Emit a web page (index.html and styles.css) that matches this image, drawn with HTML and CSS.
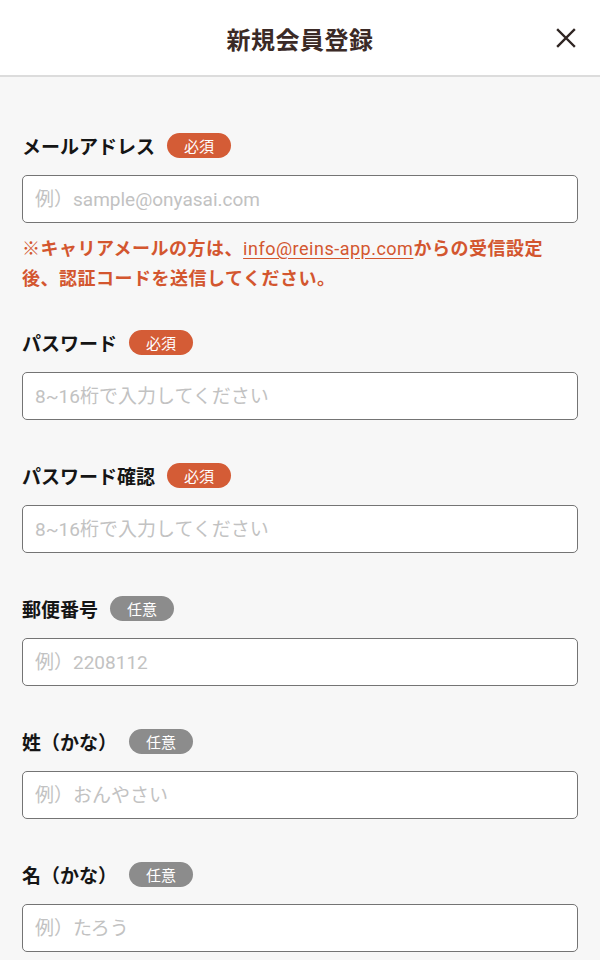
FILE: index.html
```html
<!DOCTYPE html>
<html lang="ja">
<head>
<meta charset="utf-8">
<title>新規会員登録</title>
<link rel="stylesheet" href="styles.css">
</head>
<body>
<header class="header">
  <h1 class="title">新規会員登録</h1>
  <button class="close" aria-label="閉じる">
    <svg width="20" height="20" viewBox="0 0 20 20"><path d="M2 2 L18 18 M18 2 L2 18" stroke="#2f2522" stroke-width="2.4" stroke-linecap="square" fill="none"/></svg>
  </button>
</header>
<main class="form">
  <div class="group">
    <div class="label-row"><span class="label">メールアドレス</span><span class="badge badge-req">必須</span></div>
    <input class="field" type="email" placeholder="例）sample@onyasai.com">
    <p class="note">※キャリアメールの方は、<a class="note-link" href="#">info@reins-app.com</a>からの受信設定後、認証コードを送信してください。</p>
  </div>
  <div class="group">
    <div class="label-row"><span class="label">パスワード</span><span class="badge badge-req">必須</span></div>
    <input class="field" type="text" placeholder="8~16桁で入力してください">
  </div>
  <div class="group">
    <div class="label-row"><span class="label">パスワード確認</span><span class="badge badge-req">必須</span></div>
    <input class="field" type="text" placeholder="8~16桁で入力してください">
  </div>
  <div class="group">
    <div class="label-row"><span class="label">郵便番号</span><span class="badge badge-opt">任意</span></div>
    <input class="field" type="text" placeholder="例）2208112">
  </div>
  <div class="group">
    <div class="label-row"><span class="label">姓（かな）</span><span class="badge badge-opt">任意</span></div>
    <input class="field" type="text" placeholder="例）おんやさい">
  </div>
  <div class="group">
    <div class="label-row"><span class="label">名（かな）</span><span class="badge badge-opt">任意</span></div>
    <input class="field" type="text" placeholder="例）たろう">
  </div>
</main>
</body>
</html>
```
FILE: styles.css
```css
* { box-sizing: border-box; }
html, body {
  margin: 0;
  padding: 0;
  background: #f7f7f7;
  font-family: Roboto, "Noto Sans CJK JP", sans-serif;
}
.header {
  height: 77px;
  background: #fff;
  border-bottom: 2px solid #dcdcdc;
  display: flex;
  align-items: center;
  justify-content: center;
  position: relative;
}
.title {
  margin: 0;
  font-family: "Noto Sans CJK JP", sans-serif;
  font-size: 24px;
  font-weight: 700;
  color: #3b2a26;
  letter-spacing: 0.5px;
  padding-top: 2px;
}
.close {
  position: absolute;
  right: 24px;
  top: 28px;
  background: none;
  border: 0;
  padding: 0;
  width: 20px;
  height: 20px;
  display: flex;
}
.form {
  padding: 53px 22px 0;
  display: flex;
  flex-direction: column;
  gap: 40px;
}
.group {
  display: flex;
  flex-direction: column;
}
.label-row {
  height: 30px;
  display: flex;
  align-items: center;
  gap: 12px;
  margin-bottom: 15px;
}
.label {
  font-family: "Noto Sans CJK JP", sans-serif;
  font-size: 19px;
  font-weight: 700;
  color: #151515;
}
.badge {
  display: inline-flex;
  align-items: center;
  justify-content: center;
  width: 64px;
  height: 25px;
  border-radius: 13px;
  color: #fff;
  font-family: "Noto Sans CJK JP", sans-serif;
  font-size: 15px;
  font-weight: 400;
}
.badge-req { background: #d45c36; }
.badge-opt { background: #8c8c8c; }
.field {
  width: 100%;
  height: 48px;
  border: 1.5px solid #747474;
  border-radius: 5px;
  background: #fff;
  padding: 0 12px;
  font-family: Roboto, "Noto Sans CJK JP", sans-serif;
  font-size: 19px;
  color: #222;
  outline: none;
}
.field::placeholder { color: #c2c2c2; }
.note {
  margin: 10px 0 -4px;
  font-family: "Noto Sans CJK JP", sans-serif;
  font-size: 18px;
  font-weight: 700;
  line-height: 28px;
  letter-spacing: 0.5px;
  color: #d3562f;
}
.note-link {
  color: #d3562f;
  font-family: Roboto, sans-serif;
  font-weight: 400;
  text-decoration: underline;
  text-underline-offset: 3px;
}
```
